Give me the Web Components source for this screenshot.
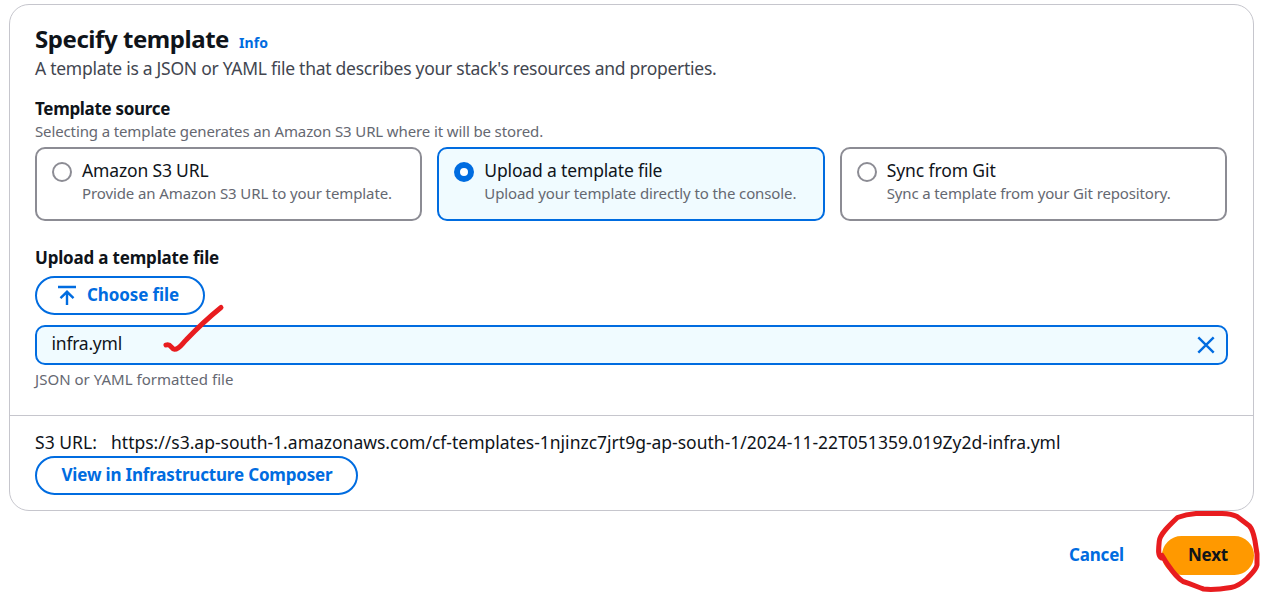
<!DOCTYPE html>
<html lang="en">
<head>
<meta charset="utf-8">
<title>Specify template</title>
<style>
html, body { margin: 0; height: 100%; }
body { background: #fff; color: #0f141a; font: 17.5px/22px "Noto Sans", "Open Sans", sans-serif; overflow: hidden; }
</style>
</head>
<body>
<template-page></template-page>
<script>
class BaseElement extends HTMLElement {
  connectedCallback() {
    if (this.shadowRoot) return;
    this.attachShadow({ mode: 'open' }).innerHTML = this.render();
  }
}

customElements.define('choice-tile', class extends BaseElement {
  render() {
    return `<style>
      :host { display: flex; box-sizing: border-box; height: 74px; padding: 10px 14px 0 15px; gap: 10px;
        border: 2px solid #8c8c94; border-radius: 10px; background: #fff; }
      :host([selected]) { border-color: #006ce0; background: #f0fbff; }
      .radio { flex: none; box-sizing: border-box; width: 20px; height: 20px; margin-top: 3px; border: 2px solid #8c8c94; border-radius: 50%; background: #fff; }
      :host([selected]) .radio { border: 6px solid #006ce0; }
      .body { display: flex; flex-direction: column; align-items: flex-start; }
      .desc { color: #656871; font-size: 15px; line-height: 20px; margin-top: 2px; }
    </style>
    <span class="radio"></span>
    <div class="body"><slot></slot><div class="desc"><slot name="desc"></slot></div></div>`;
  }
});

customElements.define('pill-button', class extends BaseElement {
  render() {
    return `<style>
      :host { display: flex; width: fit-content; box-sizing: border-box; height: 39px; align-items: center; padding: 0 24px 1px;
        border: 2px solid #006ce0; border-radius: 20px; color: #006ce0; font-size: 17px; font-weight: 700; gap: 10px; }
      :host([primary]) { background: #ff9900; border-color: #ff9900; color: #0f141a; }
      :host([plain]) { border-color: transparent; }
      ::slotted(svg) { flex: none; }
    </style><slot></slot>`;
  }
});

customElements.define('file-token', class extends BaseElement {
  render() {
    return `<style>
      :host { display: flex; box-sizing: border-box; height: 40px; justify-content: space-between; padding: 5px 11px 0 14.5px;
        border: 2px solid #006ce0; border-radius: 10px; background: #f0fbff; }
      svg { margin-top: 3.5px; }
    </style><slot></slot>
    <svg width="18" height="18" viewBox="0 0 18 18" fill="none" stroke="#006ce0" stroke-width="2.4"><path d="M1.3 1.3 16.7 16.7M16.7 1.3 1.3 16.7"/></svg>`;
  }
});

customElements.define('panel-card', class extends BaseElement {
  render() {
    return `<style>
      :host { display: block; box-sizing: border-box; height: 507px; margin: 0 14px 0 9px; border: 1px solid #c6c6cd; border-radius: 20px; }
      .main { box-sizing: border-box; height: 410px; padding: 18px 25px 0; }
      .foot { border-top: 1px solid #c6c6cd; padding: 15px 25px 0; }
    </style>
    <div class="main"><slot></slot></div><div class="foot"><slot name="footer"></slot></div>`;
  }
});

customElements.define('ink-marks', class extends BaseElement {
  render() {
    return `<style>:host { position: absolute; inset: 0; pointer-events: none; } svg { display: block; }</style>
    <svg width="1268" height="593" fill="none" stroke="#e81c1f" stroke-width="5" stroke-linecap="round" stroke-linejoin="round">
      <path d="M166 345C171 343 171 349 174.500 349.300C179 349.500 182 344 186 340C196 329.500 208 318 221 307.500"/>
      <path d="M1161.500 558C1157.500 556 1158.500 549 1159.300 541C1160 534 1169 525.500 1177.500 517.500C1184 515 1189 514 1196 513.500H1222C1228 513.700 1233 514.500 1237 516.500L1249.500 526C1253 530 1254 536 1255 541L1257 554V565C1256 570 1251 574 1247 578.500C1242 583 1237 586.500 1231 587.500C1222 589 1211 590 1203.500 589C1197 587 1192 584 1183 581.500C1176 577 1172 571 1168 565C1165 561 1163.500 558 1162 555.500"/>
    </svg>`;
  }
});

customElements.define('template-page', class extends BaseElement {
  render() {
    return `<style>
      :host { display: block; position: relative; height: 593px; box-sizing: border-box; padding-top: 4px; overflow: hidden; }
      h1 { margin: 0; height: 32px; font-size: 24px; line-height: 32px; font-weight: 700; display: flex; align-items: baseline; gap: 10px; }
      .info { font-size: 14px; color: #006ce0; }
      .sub { color: #424650; margin-top: 2px; height: 22px; }
      .label { font-size: 17px; font-weight: 700; margin-top: 19px; height: 22px; }
      .hint { color: #656871; font-size: 15px; line-height: 20px; margin-top: 1px; height: 20px; }
      .tiles { display: grid; grid-template-columns: repeat(3, 1fr); gap: 15px; margin: 6px 1px 0 0; }
      .upload { margin-top: 26px; }
      .choose { margin-top: 7px; padding-left: 20px; }
      file-token { margin-top: 10px; }
      .format { margin-top: 4px; }
      .url { display: flex; gap: 14px; height: 22px; }
      .compose { margin-top: 3px; padding-left: 24.5px; padding-right: 23.5px; }
      .actions { display: flex; justify-content: flex-end; gap: 12px; margin: 25px 14px 0 0; }
    </style>
    <panel-card>
      <h1><fit-text w="194">Specify template</fit-text><fit-text class="info" w="29">Info</fit-text></h1>
      <div class="sub"><fit-text w="681.500">A template is a JSON or YAML file that describes your stack's resources and properties.</fit-text></div>
      <div class="label"><fit-text w="135">Template source</fit-text></div>
      <div class="hint"><fit-text w="508">Selecting a template generates an Amazon S3 URL where it will be stored.</fit-text></div>
      <div class="tiles">
        <choice-tile><fit-text w="126.500">Amazon S3 URL</fit-text><fit-text slot="desc" w="310">Provide an Amazon S3 URL to your template.</fit-text></choice-tile>
        <choice-tile selected><fit-text w="178">Upload a template file</fit-text><fit-text slot="desc" w="312">Upload your template directly to the console.</fit-text></choice-tile>
        <choice-tile><fit-text w="109">Sync from Git</fit-text><fit-text slot="desc" w="284">Sync a template from your Git repository.</fit-text></choice-tile>
      </div>
      <div class="label upload"><fit-text w="184">Upload a template file</fit-text></div>
      <pill-button class="choose">
        <svg width="20" height="20" viewBox="0 0 20 20" fill="none" stroke="#006ce0" stroke-width="2.400"><path d="M1 2H19M10 20V7M3.500 13.200 10 6.800 16.500 13.200"/></svg>
        <fit-text w="92">Choose file</fit-text>
      </pill-button>
      <file-token><fit-text w="70.500">infra.yml</fit-text></file-token>
      <div class="hint format"><fit-text w="198.500">JSON or YAML formatted file</fit-text></div>
      <div slot="footer">
        <div class="url"><fit-text w="62">S3 URL:</fit-text><fit-text w="949.500">https://s3.ap-south-1.amazonaws.com/cf-templates-1njinzc7jrt9g-ap-south-1/2024-11-22T051359.019Zy2d-infra.yml</fit-text></div>
        <pill-button class="compose"><fit-text w="271">View in Infrastructure Composer</fit-text></pill-button>
      </div>
    </panel-card>
    <div class="actions">
      <pill-button plain><fit-text w="55">Cancel</fit-text></pill-button>
      <pill-button primary><fit-text w="40">Next</fit-text></pill-button>
    </div>
    <ink-marks></ink-marks>`;
  }
});

/* A single line of text whose tracking is adjusted to fill the measure given in "w". */
customElements.define('fit-text', class extends BaseElement {
  render() {
    return `<style>:host { display: inline-block; white-space: nowrap; }</style><slot></slot>`;
  }
  connectedCallback() {
    super.connectedCallback();
    const natural = this.getBoundingClientRect().width;
    const count = this.textContent.length;
    this.style.letterSpacing = ((this.getAttribute('w') - natural) / count).toFixed(3) + 'px';
  }
});
</script>
</body>
</html>
